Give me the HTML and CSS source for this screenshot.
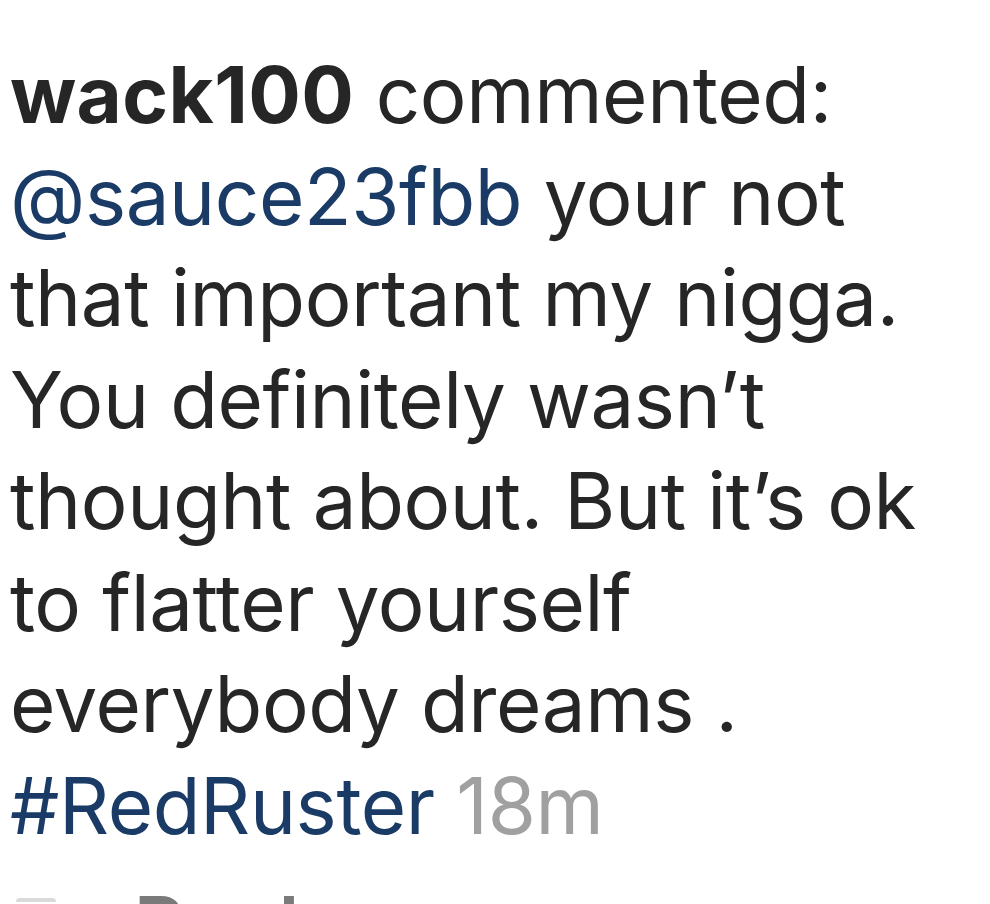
FILE: index.html
```html
<!DOCTYPE html>
<html>
<head>
<meta charset="utf-8">
<link rel="stylesheet" href="styles.css">
</head>
<body>
<div class="comment">
<p class="text"><span class="user">wack100</span> commented:<br><span class="link">@sauce23fbb</span> your not<br>that important my nigga.<br>You definitely wasn’t<br>thought about. But it’s ok<br>to flatter yourself<br>everybody dreams .<br><span class="link">#RedRuster</span> <span class="time">18m</span></p>
<div class="actions"><span class="reply-icon"></span><span class="reply">Reply</span></div>
</div>
</body>
</html>
```
FILE: styles.css
```css
html, body {
  margin: 0;
  padding: 0;
  background: #fff;
  overflow: hidden;
}
.comment {
  padding: 44px 0 0 10px;
  font-family: Inter, "Noto Sans", sans-serif;
  color: #262626;
}
.text {
  margin: 0;
  font-size: 78px;
  line-height: 101.5px;
  letter-spacing: -0.4px;
  white-space: nowrap;
}
.user {
  font-weight: 700;
  letter-spacing: 0.4px;
}
.link {
  color: #1b3b67;
}
.time {
  color: #a0a0a0;
}
.actions {
  display: flex;
  align-items: flex-start;
  gap: 78px;
  margin-top: 30px;
  font-size: 78px;
  line-height: 1;
}
.reply-icon {
  width: 40px;
  height: 20px;
  margin-top: 12px;
  margin-left: 6px;
  border-top: 4px solid #dadada;
  border-radius: 4px 4px 0 0;
}
.reply {
  color: #7a7a7a;
  font-weight: 600;
}
```
